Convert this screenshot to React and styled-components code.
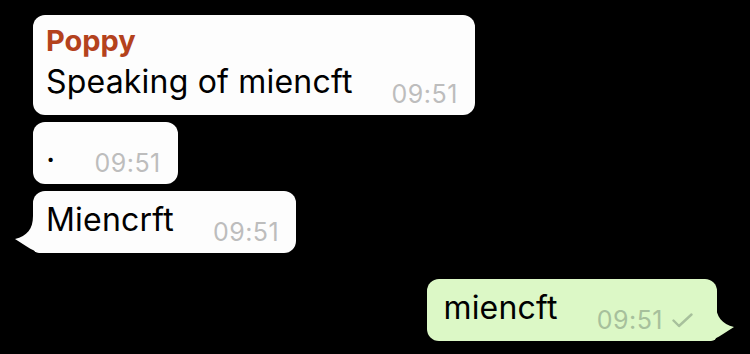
import React from "react";
import styled, { createGlobalStyle } from "styled-components";

const Global = createGlobalStyle`
  html, body { margin: 0; padding: 0; background: #000; }
  body { width: 750px; height: 354px; overflow: hidden; }
`;

const Chat = styled.div`
  display: flex;
  flex-direction: column;
  padding: 15px 15px 0 14px;
  font-family: Inter, "Liberation Sans", Arial, sans-serif;
`;

const Row = styled.div`
  display: flex;
  align-items: flex-end;
  justify-content: ${(p) => (p.$out ? "flex-end" : "flex-start")};
  margin-top: ${(p) => p.$gap || 0}px;
`;

const TailSpace = styled.div`
  flex: 0 0 ${(p) => (p.$out ? 18 : 19)}px;
`;

const TailSvg = styled.svg`
  display: block;
  flex: 0 0 22px;
  width: 22px;
  height: 40px;
  ${(p) => (p.$out ? "margin-left: -4px; transform: scaleX(-1);" : "margin-right: -3px;")}
`;

const Bubble = styled.div`
  display: flex;
  flex-direction: column;
  padding: ${(p) => (p.$out ? "10px 24px 9px 16px" : "10px 17px 9px 13px")};
  border-radius: 12px;
  ${(p) =>
    p.$tail ? (p.$out ? "border-bottom-right-radius: 6px;" : "border-bottom-left-radius: 6px;") : ""}
  background: ${(p) => (p.$out ? "#dcf8c6" : "#fdfdfd")};
`;

const Name = styled.div`
  font-weight: 700;
  font-size: 29px;
  line-height: 32px;
  color: #b4421d;
  margin-bottom: 6px;
`;

const Line = styled.div`
  display: flex;
  align-items: flex-start;
`;

const Text = styled.span`
  font-size: 32px;
  line-height: 38px;
  letter-spacing: 0.2px;
  color: #000;
  white-space: nowrap;
`;

const Meta = styled.span`
  display: flex;
  align-items: center;
  gap: 9px;
  margin-top: 19px;
  margin-left: 39px;
  font-size: 25px;
  line-height: 24px;
  letter-spacing: 0.5px;
  color: ${(p) => (p.$out ? "#a7c09c" : "#bdbdbd")};
  white-space: nowrap;
`;

function Tail({ out }) {
  return (
    <TailSvg $out={out} viewBox="0 0 22 40" aria-hidden="true">
      <path
        d="M19 3 C19 16 13 23 1 26 C8 30 14 35 22 38.5 L22 3 Z"
        fill={out ? "#dcf8c6" : "#fdfdfd"}
      />
    </TailSvg>
  );
}

function Check() {
  return (
    <svg width="21" height="15" viewBox="0 0 21 15" aria-hidden="true">
      <path
        d="M1.5 7.5 L7 13 L19.5 1.5"
        fill="none"
        stroke="#a7c09c"
        strokeWidth="2.4"
        strokeLinecap="round"
        strokeLinejoin="round"
      />
    </svg>
  );
}

function Message({ name, text, time, out, tail, gap }) {
  const side = tail ? <Tail out={out} /> : <TailSpace $out={out} />;
  return (
    <Row $out={out} $gap={gap}>
      {!out && side}
      <Bubble $out={out} $tail={tail}>
        {name && <Name>{name}</Name>}
        <Line>
          <Text>{text}</Text>
          <Meta $out={out}>
            {time}
            {out && <Check />}
          </Meta>
        </Line>
      </Bubble>
      {out && side}
    </Row>
  );
}

export default function App() {
  return (
    <>
      <Global />
      <Chat>
        <Message name="Poppy" text="Speaking of miencft" time="09:51" />
        <Message text="." time="09:51" gap={7} />
        <Message text="Miencrft" time="09:51" tail gap={7} />
        <Message text="miencft" time="09:51" out tail gap={26} />
      </Chat>
    </>
  );
}
